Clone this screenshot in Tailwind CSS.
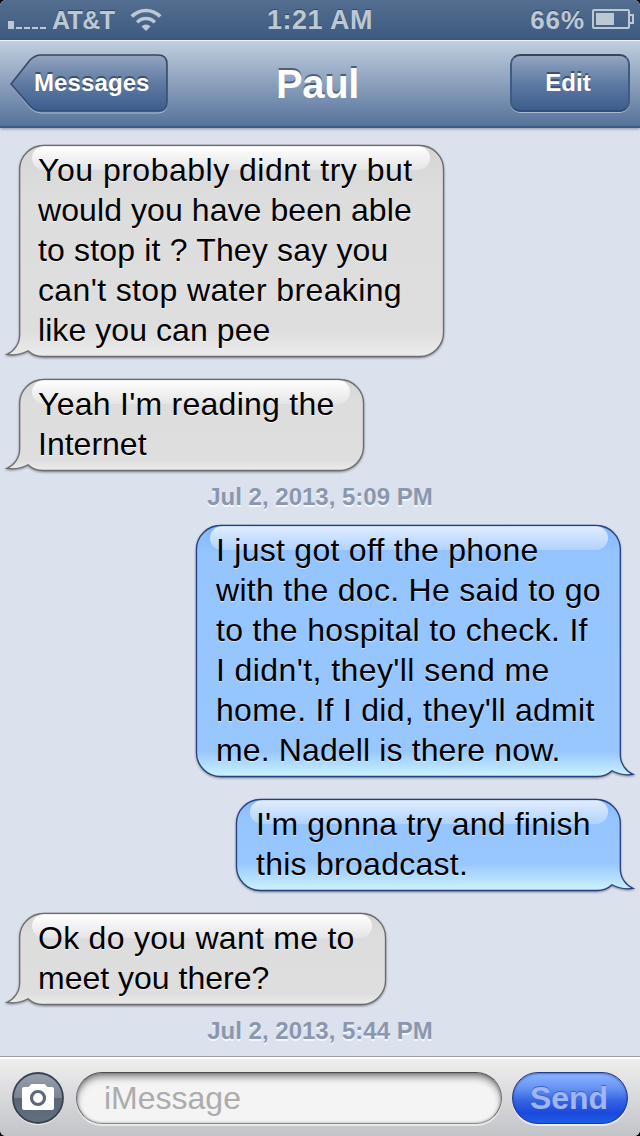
<!DOCTYPE html>
<html lang="en">
<head>
  <meta charset="UTF-8" />
  <title>Paul - Messages</title>
  <script src="https://cdn.jsdelivr.net/npm/@tailwindcss/browser@4"></script>
</head>
<body class="bg-black">
  <div class="w-[640px] h-[1136px] rounded-[6px] overflow-hidden bg-[#dbe1ed] flex flex-col font-['Liberation_Sans',Arial,sans-serif]">

    <!-- status bar -->
    <header class="h-10 shrink-0 grid grid-cols-3 items-center bg-linear-to-b from-[#536e8f] to-[#3d5a80] text-[#bdc8d5] text-[25px] leading-10 font-bold [text-shadow:0_-1px_0_#2c4567]">
      <div class="flex items-center pl-2">
        <svg class="w-[39px] h-10" viewBox="0 0 39 40" fill="#bdc8d5">
          <path d="M0 21h6v8H0zM8 27h6v2H8zM16 27h6v2h-6zM24 27h6v2h-6zM32 27h6v2h-6z" />
        </svg>
        <span class="ml-[5px] w-[64px] whitespace-nowrap tracking-[-0.6px]">AT&amp;T</span>
        <svg class="ml-[13px] w-[34px] h-10" viewBox="0 0 34 40" fill="none" stroke="#bdc8d5" stroke-width="3.6">
          <path d="M2.800 16.600a19.500 19.500 0 0 1 28.400 0" />
          <path d="M8.200 22.400a12 12 0 0 1 17.600 0" />
          <path d="M17 31l-4.500-4.500a6.300 6.300 0 0 1 9 0z" fill="#bdc8d5" stroke="none" />
        </svg>
      </div>
      <div class="text-center whitespace-nowrap text-[27px] tracking-[0.5px]">1:21 AM</div>
      <div class="flex items-center justify-end pr-[6px]">
        <span class="text-[26px] tracking-[0.9px]">66%</span>
        <svg class="ml-[6px] w-[43px] h-10" viewBox="0 0 43 40" fill="none" stroke="#bdc8d5" stroke-width="2">
          <rect x="2" y="10" width="36" height="18" rx="1" />
          <path d="M38 15h4v8h-4" />
          <path d="M5 13h18v12H5z" fill="#bdc8d5" stroke="none" />
        </svg>
      </div>
    </header>

    <!-- navigation bar -->
    <nav class="relative z-10 h-[88px] shrink-0 flex justify-between items-start pt-[13px] pl-[10px] pr-[10px] border-t border-t-[#eef3f8] border-b-2 border-b-[#3b5a86] bg-linear-to-b from-[#c1cfdf] to-[#57739a] shadow-[0_1px_3px_rgba(0,0,0,0.35)] text-white font-bold">
      <button class="relative w-[158px] h-[60px] pl-6 pb-[3px] text-left text-[24px] tracking-[0.1px] [text-shadow:0_-2px_0_#3a506f]">
        <svg class="absolute inset-0 w-[158px] h-[60px]" viewBox="0 0 158 60" fill="none">
          <defs>
            <linearGradient id="btn" x1="0" y1="0" x2="0" y2="1">
              <stop offset="0" stop-color="#94a5c0" />
              <stop offset=".5" stop-color="#5f7ba3" />
              <stop offset="1" stop-color="#3c5d8d" />
            </linearGradient>
            <linearGradient id="btnEdge" x1="0" y1="0" x2="0" y2="1">
              <stop offset="0" stop-color="#3a4557" />
              <stop offset="1" stop-color="#314d78" />
            </linearGradient>
          </defs>
          <path d="M1 31L20 7Q25 2 31 2H148Q157 2 157 11V49Q157 59 148 59H31Q25 59 20 54Z" stroke="#a9bad1" />
          <path d="M1 30L20 6Q25 1 31 1H148Q157 1 157 10V48Q157 57 148 57H31Q25 57 20 52Z" fill="url(#btn)" stroke="url(#btnEdge)" stroke-width="1.6" />
        </svg>
        <span class="relative">Messages</span>
      </button>
      <h1 class="w-20 pr-[5px] flex justify-center text-[40px] leading-[60px] tracking-[-0.4px] [text-shadow:0_-2px_0_#4d5f7b]">Paul</h1>
      <div class="w-[158px] flex justify-end">
        <button class="w-[120px] h-[58px] pb-px pr-1 rounded-[10px] border-2 border-t-[#3a4557] border-x-[#405b83] border-b-[#314d78] bg-linear-to-b from-[#94a5c0] via-[#5f7ba3] to-[#3c5d8d] shadow-[0_1px_0_#a9bad1] text-[24px] [text-shadow:0_-2px_0_#3a506f]">Edit</button>
      </div>
    </nav>

    <!-- shared gradients for the bubbles -->
    <svg class="absolute w-0 h-0">
      <defs>
        <linearGradient id="grey" x1="0" y1="0" x2="0" y2="1">
          <stop offset="0" stop-color="#d6d6d6" />
          <stop offset=".25" stop-color="#dddddd" />
          <stop offset=".88" stop-color="#dedede" />
          <stop offset="1" stop-color="#ececec" />
        </linearGradient>
        <linearGradient id="greyGloss" x1="0" y1="0" x2="0" y2="1">
          <stop offset="0" stop-color="#ffffff" />
          <stop offset="1" stop-color="#e5e5e5" />
        </linearGradient>
        <linearGradient id="blue" x1="0" y1="0" x2="0" y2="1">
          <stop offset="0" stop-color="#84b8fd" />
          <stop offset=".2" stop-color="#95c5ff" />
          <stop offset=".7" stop-color="#98c7ff" />
          <stop offset="1" stop-color="#cdf2ff" />
        </linearGradient>
        <linearGradient id="blueTall" x1="0" y1="0" x2="0" y2="1">
          <stop offset="0" stop-color="#84b8fd" />
          <stop offset=".12" stop-color="#95c5ff" />
          <stop offset=".9" stop-color="#98c7ff" />
          <stop offset="1" stop-color="#cdf2ff" />
        </linearGradient>
        <linearGradient id="blueGloss" x1="0" y1="0" x2="0" y2="1">
          <stop offset="0" stop-color="#e2edff" />
          <stop offset="1" stop-color="#b0d3ff" />
        </linearGradient>
      </defs>
    </svg>

    <main class="h-[928px] shrink-0 flex flex-col pt-[17px] text-[32px] leading-10 text-black">
      <div class="relative shrink-0 h-[212px] pl-[38px] pt-[5px] whitespace-nowrap [text-shadow:0_1px_0_rgba(255,255,255,0.7)]">
        <svg class="absolute left-0 top-0 w-[450px] h-[216px] overflow-visible drop-shadow-[0_1px_1px_rgba(0,0,0,0.4)]" viewBox="0 0 450 216">
          <path d="M19.700 24.500V190C19.700 199 14 206.500 7 209.400C14 210.500 22 209 28 205.800C32 209.500 37 211.500 43 211.500H419.500A24 24 0 0 0 443.500 187.500V24.500A24 24 0 0 0 419.500 .5H43.700A24 24 0 0 0 19.700 24.500Z" fill="url(#grey)" stroke="#6c6c6c" stroke-width="1.3" />
          <rect x="32" y="1.2" width="398" height="23.8" rx="12" fill="url(#greyGloss)" />
        </svg>
        <p class="relative">
          <span class="block tracking-[0.5px]">You probably didnt try but</span>
          <span class="block tracking-[0.08px]">would you have been able</span>
          <span class="block tracking-[0.17px]">to stop it ? They say you</span>
          <span class="block tracking-[0.37px]">can't stop water breaking</span>
          <span class="block tracking-[0.07px]">like you can pee</span>
        </p>
      </div>

      <div class="relative shrink-0 mt-[22px] h-[92px] pl-[38px] pt-[5px] whitespace-nowrap [text-shadow:0_1px_0_rgba(255,255,255,0.7)]">
        <svg class="absolute left-0 top-0 w-[370px] h-[96px] overflow-visible drop-shadow-[0_1px_1px_rgba(0,0,0,0.4)]" viewBox="0 0 370 96">
          <path d="M19.700 24.500V70C19.700 79 14 86.500 7 89.400C14 90.500 22 89 28 85.800C32 89.500 37 91.500 43 91.500H339.500A24 24 0 0 0 363.500 67.500V24.500A24 24 0 0 0 339.500 .5H43.700A24 24 0 0 0 19.700 24.500Z" fill="url(#grey)" stroke="#6c6c6c" stroke-width="1.3" />
          <rect x="32" y="1.2" width="318" height="23.8" rx="12" fill="url(#greyGloss)" />
        </svg>
        <p class="relative">
          <span class="block tracking-[0.26px]">Yeah I'm reading the</span>
          <span class="block">Internet</span>
        </p>
      </div>

      <div class="shrink-0 h-[54px] text-center text-[24px] leading-[52px] font-bold text-[#8a97ae] [text-shadow:0_2px_0_#f3f7fd]">Jul 2, 2013, 5:09 PM</div>

      <div class="relative shrink-0 h-[252px] pl-[216px] pt-[5px] whitespace-nowrap [text-shadow:0_1px_0_rgba(255,255,255,0.5)]">
        <svg class="absolute left-0 top-0 w-[640px] h-[256px] overflow-visible drop-shadow-[0_1px_1px_rgba(0,0,0,0.4)]" viewBox="0 0 640 256">
          <path d="M620.300 24.500V230C620.300 239 626 246.500 633 249.400C626 250.500 618 249 612 245.800C608 249.500 603 251.500 597 251.500H220.500A24 24 0 0 1 196.500 227.500V24.500A24 24 0 0 1 220.500 .5H596.300A24 24 0 0 1 620.300 24.500Z" fill="url(#blueTall)" stroke="#253f7f" stroke-width="1.3" />
          <rect x="210" y="1.2" width="398" height="23.8" rx="12" fill="url(#blueGloss)" />
        </svg>
        <p class="relative">
          <span class="block tracking-[0.27px]">I just got off the phone</span>
          <span class="block tracking-[0.29px]">with the doc. He said to go</span>
          <span class="block tracking-[0.32px]">to the hospital to check. If</span>
          <span class="block tracking-[0.41px]">I didn't, they'll send me</span>
          <span class="block tracking-[0.27px]">home. If I did, they'll admit</span>
          <span class="block tracking-[0.13px]">me. Nadell is there now.</span>
        </p>
      </div>

      <div class="relative shrink-0 mt-[22px] h-[92px] pl-[256px] pt-[5px] whitespace-nowrap [text-shadow:0_1px_0_rgba(255,255,255,0.5)]">
        <svg class="absolute left-0 top-0 w-[640px] h-[96px] overflow-visible drop-shadow-[0_1px_1px_rgba(0,0,0,0.4)]" viewBox="0 0 640 96">
          <path d="M620.300 24.500V70C620.300 79 626 86.500 633 89.400C626 90.500 618 89 612 85.800C608 89.500 603 91.500 597 91.500H260.500A24 24 0 0 1 236.500 67.500V24.500A24 24 0 0 1 260.500 .5H596.300A24 24 0 0 1 620.300 24.500Z" fill="url(#blue)" stroke="#253f7f" stroke-width="1.3" />
          <rect x="250" y="1.2" width="358" height="23.8" rx="12" fill="url(#blueGloss)" />
        </svg>
        <p class="relative">
          <span class="block tracking-[0.2px]">I'm gonna try and finish</span>
          <span class="block tracking-[0.27px]">this broadcast.</span>
        </p>
      </div>

      <div class="relative shrink-0 mt-[22px] h-[92px] pl-[38px] pt-[5px] whitespace-nowrap [text-shadow:0_1px_0_rgba(255,255,255,0.7)]">
        <svg class="absolute left-0 top-0 w-[390px] h-[96px] overflow-visible drop-shadow-[0_1px_1px_rgba(0,0,0,0.4)]" viewBox="0 0 390 96">
          <path d="M19.700 24.500V70C19.700 79 14 86.500 7 89.400C14 90.500 22 89 28 85.800C32 89.500 37 91.500 43 91.500H361.500A24 24 0 0 0 385.500 67.500V24.500A24 24 0 0 0 361.500 .5H43.700A24 24 0 0 0 19.700 24.500Z" fill="url(#grey)" stroke="#6c6c6c" stroke-width="1.3" />
          <rect x="32" y="1.2" width="340" height="23.8" rx="12" fill="url(#greyGloss)" />
        </svg>
        <p class="relative">
          <span class="block tracking-[0.27px]">Ok do you want me to</span>
          <span class="block">meet you there?</span>
        </p>
      </div>

      <div class="shrink-0 h-[51px] text-center text-[24px] leading-[52px] font-bold text-[#8a97ae] [text-shadow:0_2px_0_#f3f7fd]">Jul 2, 2013, 5:44 PM</div>
    </main>

    <!-- compose bar -->
    <footer class="h-20 shrink-0 flex items-start pl-3 pr-3 pt-[14px] border-t border-t-[#9b9ea4] bg-linear-to-b from-[#efefef] to-[#c3c4c8] shadow-[inset_0_2px_0_#fff]">
      <svg class="w-[52px] h-[54px] mt-px shrink-0" viewBox="0 0 52 54">
        <defs>
          <linearGradient id="cam" x1="0" y1="0" x2="0" y2="1">
            <stop offset="0" stop-color="#9aa1af" />
            <stop offset=".5" stop-color="#7a8492" />
            <stop offset=".5" stop-color="#5a6675" />
            <stop offset="1" stop-color="#626f7e" />
          </linearGradient>
        </defs>
        <circle cx="26" cy="27.5" r="25.5" fill="#f2f2f2" />
        <circle cx="26" cy="26" r="25" fill="url(#cam)" stroke="#394252" stroke-width="1.8" />
        <path d="M12 15h4q1 0 1.600-1l.8-1.200Q19 12 20 12h12q1 0 1.600.8l.8 1.200q.6 1 1.600 1h4q2 0 2 2v19q0 2-2 2H12q-2 0-2-2V17q0-2 2-2z" fill="#fff" />
        <circle cx="26" cy="26" r="6.500" fill="none" stroke="#5d6979" stroke-width="3.200" />
      </svg>
      <div class="ml-3 mt-px w-[426px] h-[52px] pl-[27px] rounded-full border border-t-[#4c4c4c] border-x-[#6a6a6a] border-b-[#8b8b8b] bg-[#f4f4f4] shadow-[inset_0_5px_7px_-1px_rgba(0,0,0,0.45),inset_0_0_3px_rgba(0,0,0,0.3),0_2px_0_rgba(255,255,255,0.6)] text-[32px] leading-[50px] text-[#acacac]">iMessage</div>
      <button class="ml-[10px] mt-px w-[116px] h-[52px] pb-px pr-[2px] rounded-full border border-[#1f3a8c] bg-[linear-gradient(#8db5ff,#6794f4_30%,#3565e2_55%,#1b48dc_80%,#1c5fe8)] shadow-[inset_0_1px_2px_rgba(0,20,90,0.4),0_2px_0_rgba(255,255,255,0.6)] text-[32px] leading-[48px] font-bold text-[#a0b6f2] [text-shadow:0_-1px_0_#3d64c4]">Send</button>
    </footer>
  </div>
</body>
</html>
